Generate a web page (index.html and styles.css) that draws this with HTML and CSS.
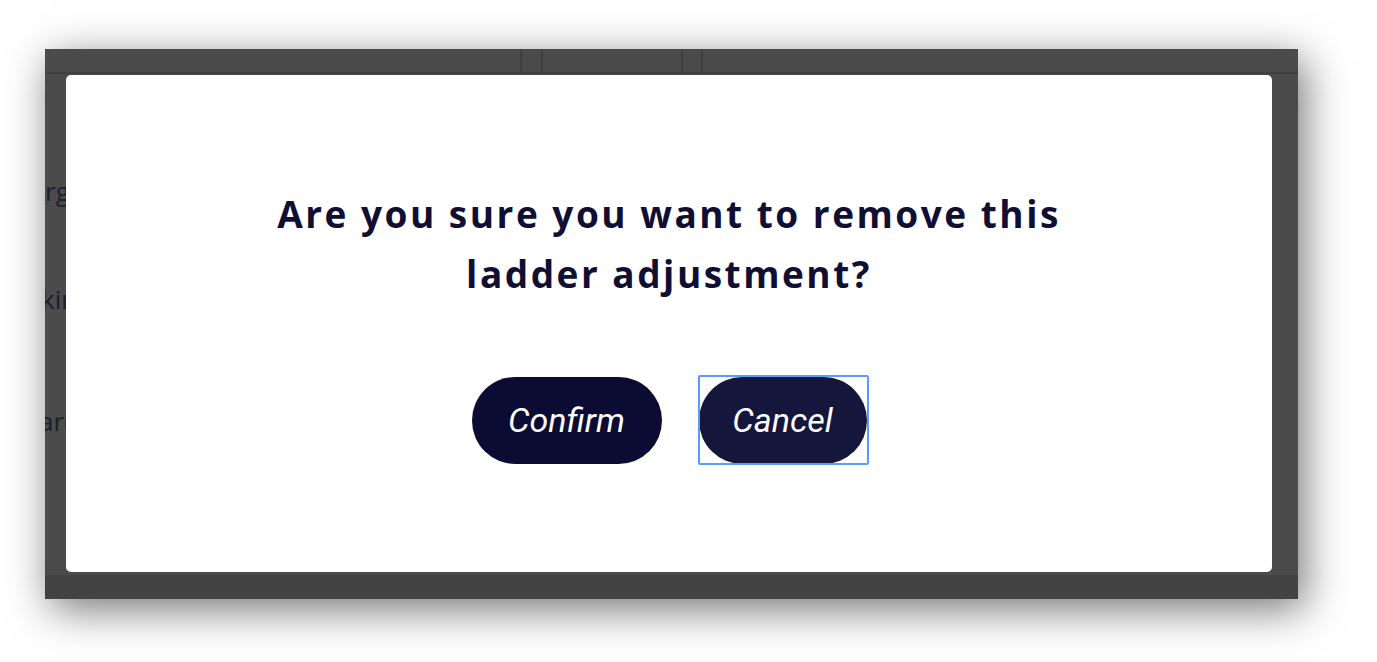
FILE: index.html
```html
<!DOCTYPE html>
<html lang="en">
<head>
<meta charset="utf-8">
<title>Remove ladder adjustment</title>
<link rel="stylesheet" href="styles.css">
</head>
<body>
  <div class="frame">
    <div class="thead">
      <div class="th th-a"></div>
      <div class="th th-b"></div>
      <div class="th th-c"></div>
    </div>
    <div class="rows">
      <div class="row">rge</div>
      <div class="row">kin</div>
      <div class="row">ard</div>
    </div>
    <div class="tfoot"></div>

    <div class="modal" role="dialog" aria-modal="true">
      <h2 class="modal-title">Are you sure you want to remove this ladder adjustment?</h2>
      <div class="modal-actions">
        <button class="btn btn-confirm" type="button">Confirm</button>
        <button class="btn btn-cancel is-focused" type="button">Cancel</button>
      </div>
    </div>
  </div>
</body>
</html>
```

FILE: styles.css
```css
html, body {
  margin: 0;
  padding: 0;
  background: #ffffff;
}

body {
  box-sizing: border-box;
  min-height: 662px;
  padding: 49px 0 63px 45px;
  font-family: "Open Sans", "Liberation Sans", sans-serif;
}

.frame {
  position: relative;
  width: 1253px;
  height: 550px;
  background: #4b4b4b;
  box-shadow: 6px 10px 40px rgba(0, 0, 0, 0.55);
  overflow: hidden;
  display: flex;
  flex-direction: column;
}

.thead {
  display: flex;
  flex: none;
  height: 25px;
  border-bottom: 2px solid #404040;
  box-sizing: border-box;
}

.th {
  height: 100%;
  box-sizing: border-box;
}

.th-a {
  width: 477px;
  border-right: 2px solid #404040;
}

.th-b {
  width: 142px;
  margin-left: 19px;
  border-left: 2px solid #404040;
  border-right: 2px solid #404040;
}

.th-c {
  flex: 1;
  margin-left: 18px;
  border-left: 2px solid #404040;
}

.rows {
  display: flex;
  flex-direction: column;
}

.row {
  font-size: 26px;
  line-height: 36px;
  height: 36px;
  color: #1d1e2e;
  white-space: nowrap;
}

.row:nth-child(1) { margin-top: 99px; }
.row:nth-child(2) { margin-top: 72px; margin-left: -4px; }
.row:nth-child(3) { margin-top: 86px; margin-left: -6px; }

.tfoot {
  flex: none;
  margin-top: auto;
  height: 24px;
  background: #434343;
}

.modal {
  position: absolute;
  left: 21px;
  top: 26px;
  width: 1206px;
  height: 497px;
  background: #ffffff;
  border-radius: 5px;
  display: flex;
  flex-direction: column;
  align-items: center;
  justify-content: center;
}

.modal-title {
  margin: 0 0 73px;
  max-width: 830px;
  text-align: center;
  font-family: "Open Sans", "Liberation Sans", sans-serif;
  font-weight: 700;
  font-size: 37px;
  line-height: 60px;
  letter-spacing: 2.5px;
  color: #100e33;
}

.modal-actions {
  display: flex;
  gap: 37px;
}

.btn {
  position: relative;
  border: none;
  height: 87px;
  padding: 0;
  border-radius: 44px;
  font-family: "Roboto", "Liberation Sans", sans-serif;
  font-style: italic;
  font-weight: 400;
  font-size: 34px;
  color: #ffffff;
  cursor: pointer;
}

.btn-confirm {
  width: 190px;
  background: #0b0b33;
}

.btn-cancel {
  width: 168px;
  background: #15163b;
}

.is-focused {
  outline: none;
}

.is-focused::after {
  content: "";
  position: absolute;
  left: -1px;
  right: -2px;
  top: -2px;
  bottom: -1px;
  border: 2px solid #5d9cf6;
  border-radius: 2px;
  pointer-events: none;
}
```
